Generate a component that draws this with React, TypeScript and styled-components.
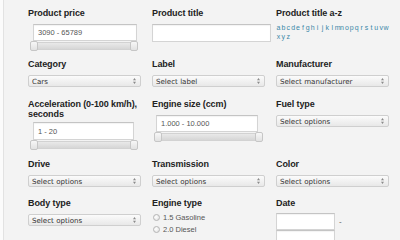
import React from "react";
import styled, { createGlobalStyle } from "styled-components";

const GlobalStyle = createGlobalStyle`
  html, body {
    margin: 0;
    padding: 0;
    background: #f3f3f3;
    font-family: "Liberation Sans", Arial, sans-serif;
  }
`;

const Page = styled.div`
  width: 400px;
  height: 240px;
  box-sizing: border-box;
  background: #f3f3f3;
  border-left: 3px solid #fbfbfb;
  box-shadow: inset 1px 0 0 #e2e2e2;
  padding: 8px 0 0 25px;
  overflow: hidden;
`;

const FilterGrid = styled.div`
  display: grid;
  grid-template-columns: repeat(3, 113px);
  grid-template-rows: 51px 40px 60px 39px auto;
  column-gap: 11px;
`;

const Field = styled.div`
  display: flex;
  flex-direction: column;
  align-items: flex-start;
`;

const Label = styled.div<{ gap?: number }>`
  font-size: 9px;
  line-height: 10px;
  font-weight: bold;
  letter-spacing: -0.1px;
  white-space: nowrap;
  color: #222;
  margin-bottom: ${({ gap }) => gap ?? 6}px;
`;

const TextInput = styled.div<{ width: number; height?: number; indent?: number }>`
  box-sizing: border-box;
  width: ${({ width }) => width}px;
  height: ${({ height }) => height ?? 17}px;
  margin-left: ${({ indent }) => indent ?? 0}px;
  background: #fff;
  border: 1px solid #d4d4d4;
  border-top-color: #c4c4c4;
  box-shadow: inset 0 1px 1px rgba(0, 0, 0, 0.05);
  font-size: 7.5px;
  color: #555;
  padding-left: 4px;
  display: flex;
  align-items: center;
`;

const Track = styled.div<{ width: number; indent?: number }>`
  position: relative;
  box-sizing: border-box;
  width: ${({ width }) => width}px;
  height: 8px;
  margin-left: ${({ indent }) => indent ?? 0}px;
  margin-top: 1px;
  border: 1px solid #d2d2d2;
  border-radius: 3px;
  background: linear-gradient(#e9e9e9, #d6d6d6);
`;

const Handle = styled.span<{ side: "left" | "right" }>`
  position: absolute;
  top: -2px;
  ${({ side }) => (side === "left" ? "left: -1px;" : "right: -1px;")}
  width: 8px;
  height: 10px;
  box-sizing: border-box;
  border: 1px solid #c6c6c6;
  border-radius: 2px;
  background: linear-gradient(#f7f7f7, #e2e2e2);
`;

const Select = styled.div`
  box-sizing: border-box;
  width: 113px;
  height: 12px;
  border: 1px solid #cfcfcf;
  border-radius: 2px;
  background: linear-gradient(#fbfbfb, #e8e8e8);
  display: flex;
  align-items: center;
  justify-content: space-between;
  padding: 0 4px 0 3px;
  font-family: "DejaVu Sans", Verdana, sans-serif;
  font-size: 7.1px;
  color: #333;
`;

const Letters = styled.div`
  width: 116px;
  display: flex;
  flex-wrap: wrap;
  margin-top: 1px;
  line-height: 9px;
`;

const Letter = styled.a`
  font-size: 7px;
  color: #3b88a8;
  text-decoration: none;
  width: 4.9px;
  text-align: center;
`;

const RadioRow = styled.label`
  display: flex;
  align-items: center;
  gap: 3px;
  height: 12px;
  margin-left: 1px;
  font-size: 7.5px;
  color: #555;
`;

const RadioDot = styled.span`
  width: 7px;
  height: 7px;
  box-sizing: border-box;
  border-radius: 50%;
  border: 1px solid #b5b5b5;
  background: radial-gradient(circle at 40% 40%, #fff, #ddd);
`;

const DateRow = styled.div`
  display: flex;
  align-items: center;
  gap: 4px;
  font-size: 8px;
  color: #555;
`;

const Arrow = () => (
  <svg width="3" height="6" viewBox="0 0 3 6">
    <path d="M1.5 0 L3 2.2 L0 2.2 Z M1.5 6 L3 3.8 L0 3.8 Z" fill="#8a8a8a" />
  </svg>
);

const SelectBox = ({ text }: { text: string }) => (
  <Select>
    <span>{text}</span>
    <Arrow />
  </Select>
);

const Slider = ({ width, indent }: { width: number; indent?: number }) => (
  <Track width={width} indent={indent}>
    <Handle side="left" />
    <Handle side="right" />
  </Track>
);

const alphabet = "abcdefghijklmnopqrstuvwxyz".split("");

export default function App() {
  return (
    <Page>
      <GlobalStyle />
      <FilterGrid>
        <Field>
          <Label>Product price</Label>
          <TextInput width={104} indent={5}>3090 - 65789</TextInput>
          <Slider width={108} indent={2} />
        </Field>
        <Field>
          <Label>Product title</Label>
          <TextInput width={119} height={18} />
        </Field>
        <Field>
          <Label gap={4}>Product title a-z</Label>
          <Letters>
            {alphabet.map((l) => (
              <Letter key={l} href="#">
                {l}
              </Letter>
            ))}
          </Letters>
        </Field>

        <Field>
          <Label>Category</Label>
          <SelectBox text="Cars" />
        </Field>
        <Field>
          <Label>Label</Label>
          <SelectBox text="Select label" />
        </Field>
        <Field>
          <Label>Manufacturer</Label>
          <SelectBox text="Select manufacturer" />
        </Field>

        <Field>
          <Label gap={3}>
            Acceleration (0-100 km/h),
            <br />
            seconds
          </Label>
          <TextInput width={101} height={18} indent={5}>1 - 20</TextInput>
          <Slider width={108} indent={2} />
        </Field>
        <Field>
          <Label>Engine size (ccm)</Label>
          <TextInput width={102} indent={4}>1.000 - 10.000</TextInput>
          <Slider width={109} indent={2} />
        </Field>
        <Field>
          <Label>Fuel type</Label>
          <SelectBox text="Select options" />
        </Field>

        <Field>
          <Label>Drive</Label>
          <SelectBox text="Select options" />
        </Field>
        <Field>
          <Label>Transmission</Label>
          <SelectBox text="Select options" />
        </Field>
        <Field>
          <Label>Color</Label>
          <SelectBox text="Select options" />
        </Field>

        <Field>
          <Label>Body type</Label>
          <SelectBox text="Select options" />
        </Field>
        <Field>
          <Label gap={3}>Engine type</Label>
          <RadioRow>
            <RadioDot />
            1.5 Gasoline
          </RadioRow>
          <RadioRow>
            <RadioDot />
            2.0 Diesel
          </RadioRow>
        </Field>
        <Field>
          <Label gap={5}>Date</Label>
          <DateRow>
            <TextInput width={59} />
            <span>-</span>
          </DateRow>
          <TextInput width={59} />
        </Field>
      </FilterGrid>
    </Page>
  );
}
